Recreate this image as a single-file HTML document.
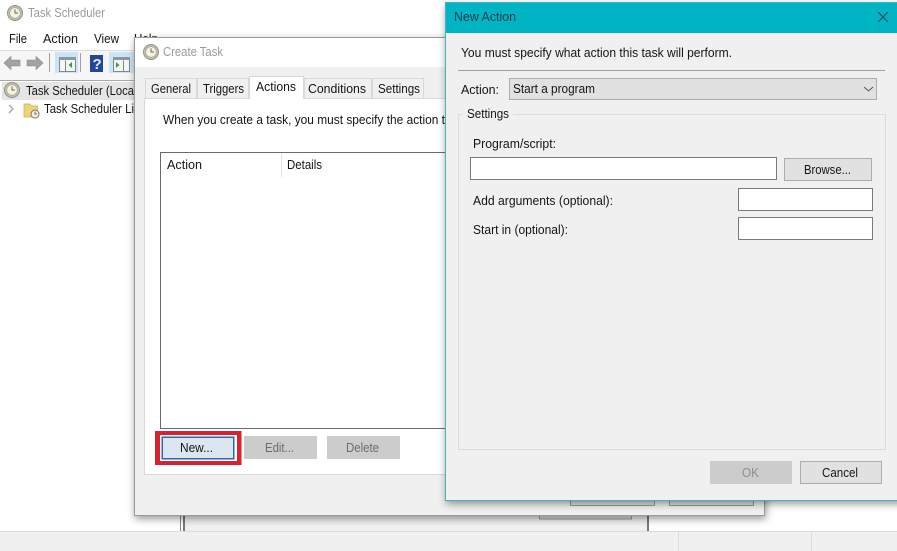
<!DOCTYPE html>
<html><head><meta charset="utf-8"><style>
html,body{margin:0;padding:0;width:897px;height:551px;overflow:hidden;background:#fff}
svg{display:block;position:absolute;left:0;top:0}
text{font-family:"Liberation Sans",sans-serif;font-size:12.5px;fill:#151515}
.g{fill:#9a9a9a;font-size:13px}
.d{fill:#6d6d6d}
</style></head><body>
<svg width="897" height="551" viewBox="0 0 897 551" xmlns="http://www.w3.org/2000/svg">
<defs>
<filter id="s" x="-10%" y="-10%" width="120%" height="120%"><feDropShadow dx="1" dy="3" stdDeviation="4" flood-color="#000" flood-opacity=".4"/></filter>
<g id="clk"><circle r="7.500" fill="#c4c2ae" stroke="#8b9191"/><circle r="5.300" fill="#f7f2da" stroke="#a09f90" stroke-width=".6"/><path d="M0-3.600V0H3" fill="none" stroke="#666" stroke-width="1"/></g>
</defs>

<!-- main window -->
<use href="#clk" x="15" y="13"/>
<text x="28" y="17" textLength="77" lengthAdjust="spacingAndGlyphs" class="g">Task Scheduler</text>
<text x="9" y="43" textLength="18" lengthAdjust="spacingAndGlyphs">File</text>
<text x="43" y="43" textLength="35" lengthAdjust="spacingAndGlyphs">Action</text>
<text x="94" y="43" textLength="25" lengthAdjust="spacingAndGlyphs">View</text>
<text x="134" y="43" textLength="24" lengthAdjust="spacingAndGlyphs">Help</text>
<rect x="0" y="50" width="135" height="31" fill="#f6f6f6"/>
<rect x="0" y="50" width="135" height="1" fill="#dcdcdc"/>
<rect x="0" y="80" width="135" height="1" fill="#a8a8a8"/>
<path d="M4 63l7-6.500V60h9v6h-9v3.500z" fill="#a3a3a3" stroke="#8a8a8a" stroke-width=".6"/>
<path d="M43 63l-7-6.500V60h-9v6h9v3.500z" fill="#a3a3a3" stroke="#8a8a8a" stroke-width=".6"/>
<rect x="49" y="53" width="1" height="19" fill="#a0a0a0"/>
<rect x="55" y="52" width="23" height="21" fill="#cce4f7"/>
<rect x="59.500" y="57.500" width="16" height="14" fill="#f4f6f4" stroke="#7d8a8a"/><rect x="59" y="57" width="17" height="3" fill="#8a9a9c"/>
<path d="M65.500 60.500V71" stroke="#7d8a8a"/><path d="M72 62v6l-3.500-3z" fill="#3f9a45"/>
<rect x="80" y="53" width="1" height="19" fill="#a0a0a0"/>
<rect x="90" y="55" width="13" height="17" fill="#23479c"/>
<text x="92.500" y="69" style="font-size:15px;font-weight:bold;fill:#e8eefc">?</text>
<rect x="109" y="52" width="25" height="21" fill="#cce4f7"/>
<rect x="113.500" y="57.500" width="16" height="14" fill="#f4f6f4" stroke="#7d8a8a"/><rect x="113" y="57" width="17" height="3" fill="#8a9a9c"/>
<path d="M123.500 60.500V71" stroke="#7d8a8a"/><path d="M116 62v6l3.500-3z" fill="#3f9a45"/>

<rect x="2" y="82" width="134" height="18" fill="#e5e5e5"/>
<use href="#clk" x="12" y="90"/>
<text x="26" y="95" textLength="108" lengthAdjust="spacingAndGlyphs">Task Scheduler (Loca</text>
<path d="M9 105l4 4-4 4" fill="none" stroke="#a6a6a6" stroke-width="1.300"/>
<path d="M24 104h6l1.500 2h6v11h-13.500z" fill="#f0d27a" stroke="#c9a94e" stroke-width=".7"/>
<circle cx="35" cy="114" r="4" fill="#f5f1dc" stroke="#6f7674"/><path d="M35 111.500V114h2" fill="none" stroke="#444" stroke-width=".7"/>
<text x="44" y="113" textLength="90" lengthAdjust="spacingAndGlyphs">Task Scheduler Li</text>

<!-- bottom of main window -->
<rect x="0" y="531" width="897" height="20" fill="#f0f0f0"/>
<rect x="0" y="531" width="897" height="1" fill="#dcdcdc"/>
<rect x="678" y="532" width="1" height="19" fill="#dcdcdc"/>
<rect x="811" y="532" width="1" height="19" fill="#dcdcdc"/>
<rect x="180" y="510" width="1" height="21" fill="#8a8a8a"/>
<rect x="183" y="510" width="2" height="21" fill="#777"/>
<rect x="185" y="510" width="462" height="21" fill="#f0f0f0"/>
<rect x="647" y="510" width="2" height="21" fill="#777"/>
<rect x="539.500" y="505" width="92" height="14" fill="#e1e1e1" stroke="#9c9c9c"/>

<!-- Create Task -->
<rect x="134.500" y="37.500" width="630" height="478" fill="#f0f0f0" stroke="#9a9a9a" filter="url(#s)"/>
<rect x="135" y="38" width="629" height="29" fill="#fff"/>
<use href="#clk" x="151" y="52"/>
<text x="163" y="56" textLength="60" lengthAdjust="spacingAndGlyphs" class="g">Create Task</text>
<rect x="570.500" y="495" width="84" height="10.500" fill="#e1e1e1" stroke="#9c9c9c"/>
<rect x="669.500" y="495" width="84" height="10.500" fill="#e1e1e1" stroke="#9c9c9c"/>

<rect x="144.500" y="98.500" width="612" height="376" fill="#fff" stroke="#d9d9d9"/>
<rect x="145.500" y="78.500" width="51" height="20" fill="#f0f0f0" stroke="#d9d9d9"/>
<rect x="197.500" y="78.500" width="51" height="20" fill="#f0f0f0" stroke="#d9d9d9"/>
<rect x="304.500" y="78.500" width="67" height="20" fill="#f0f0f0" stroke="#d9d9d9"/>
<rect x="372.500" y="78.500" width="51" height="20" fill="#f0f0f0" stroke="#d9d9d9"/>
<path d="M249.500 99V76.500H303.500V99" fill="#fff" stroke="#d9d9d9"/>
<rect x="250" y="97" width="53" height="3" fill="#fff"/>
<text x="151" y="93" textLength="40" lengthAdjust="spacingAndGlyphs">General</text>
<text x="203" y="93" textLength="41" lengthAdjust="spacingAndGlyphs">Triggers</text>
<text x="256" y="91" textLength="40" lengthAdjust="spacingAndGlyphs">Actions</text>
<text x="308" y="93" textLength="58" lengthAdjust="spacingAndGlyphs">Conditions</text>
<text x="378" y="93" textLength="42" lengthAdjust="spacingAndGlyphs">Settings</text>
<text x="163" y="124" textLength="282" lengthAdjust="spacingAndGlyphs">When you create a task, you must specify the action t</text>

<rect x="160.500" y="152.500" width="580" height="276" fill="#fff" stroke="#6a6a6a"/>
<rect x="281" y="153" width="1" height="24" fill="#e3e3e3"/>
<text x="167" y="169" textLength="35" lengthAdjust="spacingAndGlyphs">Action</text>
<text x="287" y="169" textLength="35" lengthAdjust="spacingAndGlyphs">Details</text>

<rect x="155" y="431" width="86.500" height="34" fill="#d8222e"/>
<rect x="160" y="435" width="77" height="26" fill="#fff"/>
<rect x="161.500" y="436.500" width="73" height="23" fill="#2a6aab"/>
<rect x="163" y="438" width="70" height="20" fill="#dbe6f0"/>
<text x="180" y="452" textLength="33" lengthAdjust="spacingAndGlyphs">New...</text>
<rect x="244" y="436" width="73" height="23" fill="#cccccc"/>
<text x="265" y="452" textLength="29" lengthAdjust="spacingAndGlyphs" class="d" style="font-size:12.5px">Edit...</text>
<rect x="327" y="436" width="73" height="23" fill="#cccccc"/>
<text x="346" y="452" textLength="33" lengthAdjust="spacingAndGlyphs" class="d">Delete</text>

<!-- New Action -->
<rect x="445.500" y="2.500" width="460" height="498" fill="#f0f0f0" stroke="#3fb5bd" filter="url(#s)"/>
<rect x="446" y="3" width="451" height="30" fill="#00b4c4"/>
<text x="454" y="21" textLength="62" lengthAdjust="spacingAndGlyphs" style="fill:#113f47">New Action</text>
<path d="M878 12l10 10M888 12l-10 10" stroke="#184750" stroke-width="1.100" fill="none"/>
<text x="461" y="57" textLength="271" lengthAdjust="spacingAndGlyphs">You must specify what action this task will perform.</text>
<rect x="458" y="70" width="427" height="1" fill="#a0a0a0"/>
<text x="461" y="94" textLength="38" lengthAdjust="spacingAndGlyphs">Action:</text>
<rect x="509.500" y="78.500" width="367" height="21" fill="#e1e1e1" stroke="#adadad"/>
<text x="513" y="93" textLength="82" lengthAdjust="spacingAndGlyphs">Start a program</text>
<path d="M864 87l4.500 4 4.500-4" fill="none" stroke="#555" stroke-width="1"/>
<rect x="458.500" y="114.500" width="427" height="335" fill="#f0f0f0" stroke="#dcdcdc"/>
<rect x="463" y="110" width="50" height="8" fill="#f0f0f0"/>
<text x="467" y="118" textLength="42" lengthAdjust="spacingAndGlyphs">Settings</text>
<text x="473" y="148" textLength="83" lengthAdjust="spacingAndGlyphs">Program/script:</text>
<rect x="470.500" y="157.500" width="306" height="22" fill="#fff" stroke="#7a7a7a"/>
<rect x="784.500" y="158.500" width="87" height="22" fill="#e1e1e1" stroke="#adadad"/>
<text x="804" y="174" textLength="47" lengthAdjust="spacingAndGlyphs">Browse...</text>
<text x="473" y="205" textLength="140" lengthAdjust="spacingAndGlyphs">Add arguments (optional):</text>
<rect x="738.500" y="188.500" width="134" height="22" fill="#fff" stroke="#7a7a7a"/>
<text x="473" y="234" textLength="95" lengthAdjust="spacingAndGlyphs">Start in (optional):</text>
<rect x="738.500" y="217.500" width="134" height="22" fill="#fff" stroke="#7a7a7a"/>
<rect x="710" y="461" width="82" height="23" fill="#cccccc"/>
<text x="742" y="477" textLength="17" lengthAdjust="spacingAndGlyphs" style="fill:#8e8e8e">OK</text>
<rect x="800.500" y="461.500" width="81" height="22" fill="#e1e1e1" stroke="#adadad"/>
<text x="822" y="477" textLength="36" lengthAdjust="spacingAndGlyphs">Cancel</text>
</svg>
</body></html>
